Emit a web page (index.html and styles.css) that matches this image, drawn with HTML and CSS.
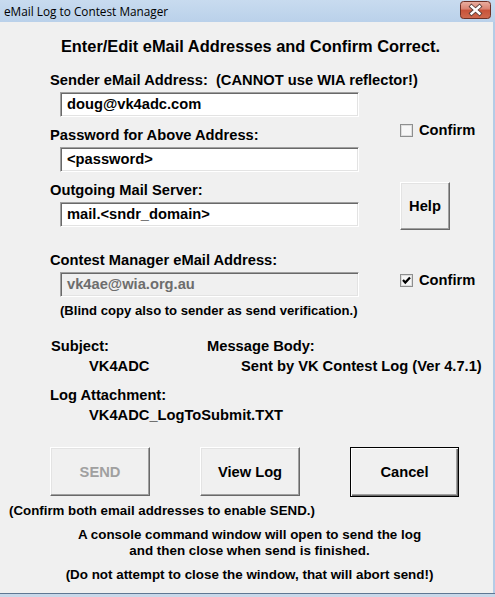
FILE: index.html
```html
<!DOCTYPE html>
<html>
<head>
<meta charset="utf-8">
<title>eMail Log to Contest Manager</title>
<link rel="stylesheet" href="styles.css">
</head>
<body>
<div class="window">
  <div class="titlebar">
    <span class="title">eMail Log to Contest Manager</span>
    <span class="close">
      <svg width="31" height="18" viewBox="0 0 31 18">
        <defs>
          <linearGradient id="cg" x1="0" y1="0" x2="0" y2="1">
            <stop offset="0" stop-color="#eab0a2"/>
            <stop offset="0.45" stop-color="#d98270"/>
            <stop offset="0.5" stop-color="#c85239"/>
            <stop offset="1" stop-color="#cf6a4f"/>
          </linearGradient>
        </defs>
        <rect x="0.5" y="0.5" width="30" height="17" rx="3" fill="url(#cg)" stroke="#6e3126"/>
        <path d="M11.5 5.5 L19.5 12.5 M19.5 5.5 L11.5 12.5" stroke="#5a3f3a" stroke-width="4.2" stroke-linecap="square"/>
        <path d="M11.5 5.5 L19.5 12.5 M19.5 5.5 L11.5 12.5" stroke="#ffffff" stroke-width="2.4" stroke-linecap="square"/>
      </svg>
    </span>
  </div>
  <div class="body">
    <h1 class="heading">Enter/Edit eMail Addresses and Confirm Correct.</h1>
    <div class="form">
      <div class="fields">
        <div class="label first">Sender eMail Address:&nbsp; (CANNOT use WIA reflector!)</div>
        <div class="input">doug@vk4adc.com</div>
        <div class="label">Password for Above Address:</div>
        <div class="input">&lt;password&gt;</div>
        <div class="label">Outgoing Mail Server:</div>
        <div class="input">mail.&lt;sndr_domain&gt;</div>
        <div class="label wide">Contest Manager eMail Address:</div>
        <div class="input disabled">vk4ae@wia.org.au</div>
        <div class="note">(Blind copy also to sender as send verification.)</div>
      </div>
      <div class="side">
        <div class="check c1"><span class="box"></span><span>Confirm</span></div>
        <div class="btn help">Help</div>
        <div class="check c2"><span class="box"><svg width="11" height="11" viewBox="0 0 11 11"><path d="M2 5 L4.3 7.6 L9 2.5" fill="none" stroke="#000" stroke-width="2.2"/></svg></span><span>Confirm</span></div>
      </div>
    </div>
    <div class="info">
      <div class="row head-row"><span class="col-a">Subject:</span><span>Message Body:</span></div>
      <div class="row val-row"><span class="col-v">VK4ADC</span><span>Sent by VK Contest Log (Ver 4.7.1)</span></div>
      <div class="row attach">Log Attachment:</div>
      <div class="row val-row">VK4ADC_LogToSubmit.TXT</div>
    </div>
    <div class="buttons">
      <div class="btn disabled">SEND</div>
      <div class="btn">View Log</div>
      <div class="btn default">Cancel</div>
    </div>
    <div class="hint">(Confirm both email addresses to enable SEND.)</div>
    <div class="centered first-c">A console command window will open to send the log<br>and then close when send is finished.</div>
    <div class="centered last-c">(Do not attempt to close the window, that will abort send!)</div>
  </div>
</div>
</body>
</html>
```
FILE: styles.css
```css
* {
  box-sizing: border-box;
  margin: 0;
  padding: 0;
}

html, body {
  width: 495px;
  height: 597px;
  overflow: hidden;
}

body {
  background: #c9d8e9;
  font-family: "Liberation Sans", Arial, sans-serif;
  font-weight: bold;
  color: #000;
}

.window {
  width: 495px;
  height: 594px;
  display: flex;
  flex-direction: column;
  border-bottom: 1px solid #5f7793;
}

.titlebar {
  height: 22px;
  flex: none;
  display: flex;
  justify-content: space-between;
  align-items: flex-start;
  background: linear-gradient(#c8dbef, #bad1ea);
  padding-left: 4px;
  padding-right: 4px;
}

.title {
  font-family: "Open Sans", "Noto Sans", sans-serif;
  font-weight: normal;
  font-size: 11.8px;
  line-height: 22px;
  color: #000;
}

.close {
  display: block;
  margin-top: 1px;
  height: 18px;
}

.close svg {
  display: block;
}

.body {
  flex: 1;
  background: #f0f0f0;
  border-right: 2px solid #b4cce6;
}

.heading {
  font-size: 16.4px;
  line-height: 20px;
  font-weight: bold;
  text-align: center;
  margin-top: 14px;
  padding-left: 8px;
}

.form {
  display: flex;
  padding-left: 50px;
}

.fields {
  width: 350px;
  font-size: 14.7px;
}

.label {
  line-height: 18px;
  margin-top: 9px;
  white-space: nowrap;
}

.label.first {
  margin-top: 15px;
}

.label.wide {
  margin-top: 24px;
}

.input {
  margin-left: 10px;
  width: 299px;
  height: 25px;
  margin-top: 3px;
  background: #fff;
  border-top: 1px solid #a0a0a0;
  border-left: 1px solid #a0a0a0;
  border-right: 1px solid #fff;
  border-bottom: 1px solid #fff;
  box-shadow: inset 1px 1px 0 #696969, inset -1px -1px 0 #e3e3e3;
  padding-left: 6px;
  line-height: 22px;
  font-size: 14.7px;
}

.input.disabled {
  background: #f0f0f0;
  color: #6d6d6d;
}

.note {
  margin-left: 10px;
  margin-top: 5px;
  line-height: 18px;
  font-size: 13.1px;
  white-space: nowrap;
}

.side {
  display: flex;
  flex-direction: column;
  align-items: flex-start;
  font-size: 14.7px;
}

.check {
  display: flex;
  align-items: center;
  gap: 6px;
  height: 18px;
  line-height: 18px;
}

.check.c1 {
  margin-top: 65px;
}

.check.c2 {
  margin-top: 41px;
}

.box {
  width: 13px;
  height: 13px;
  border: 1px solid #8e8f8f;
  background: #f7f7f7;
  box-shadow: inset 0 0 0 1px #dedede;
  display: flex;
  align-items: center;
  justify-content: center;
}

.box svg {
  display: block;
}

.btn {
  display: flex;
  align-items: center;
  justify-content: center;
  background: #f0f0f0;
  border-top: 1px solid #fff;
  border-left: 1px solid #fff;
  border-right: 1px solid #696969;
  border-bottom: 1px solid #696969;
  box-shadow: inset -1px -1px 0 #a0a0a0, inset 1px 1px 0 #e3e3e3;
  font-size: 14.7px;
  width: 100px;
  height: 49px;
}

.btn.help {
  width: 50px;
  height: 48px;
  margin-top: 43px;
}

.btn.disabled {
  color: #a0a0a0;
}

.btn.default {
  width: 109px;
  height: 50px;
  border: 1px solid #000;
  box-shadow: inset 1px 1px 0 #fff, inset -1px -1px 0 #696969, inset -2px -2px 0 #a0a0a0;
}

.info {
  padding-left: 51px;
  font-size: 14.7px;
  margin-top: 16px;
}

.row {
  line-height: 20px;
  height: 20px;
  display: flex;
  white-space: nowrap;
}

.col-a {
  width: 156px;
}

.val-row {
  padding-left: 38px;
}

.col-v {
  width: 152px;
}

.attach {
  margin-top: 9px;
  margin-left: -1px;
}

.buttons {
  display: flex;
  align-items: flex-start;
  gap: 50px;
  height: 49px;
  padding-left: 50px;
  margin-top: 22px;
}

.hint {
  font-size: 13.3px;
  line-height: 16px;
  margin-top: 7px;
  padding-left: 9px;
}

.centered {
  font-size: 13.4px;
  line-height: 16px;
  text-align: center;
  padding-left: 6px;
}

.first-c {
  margin-top: 8px;
}

.last-c {
  margin-top: 8px;
}
```
